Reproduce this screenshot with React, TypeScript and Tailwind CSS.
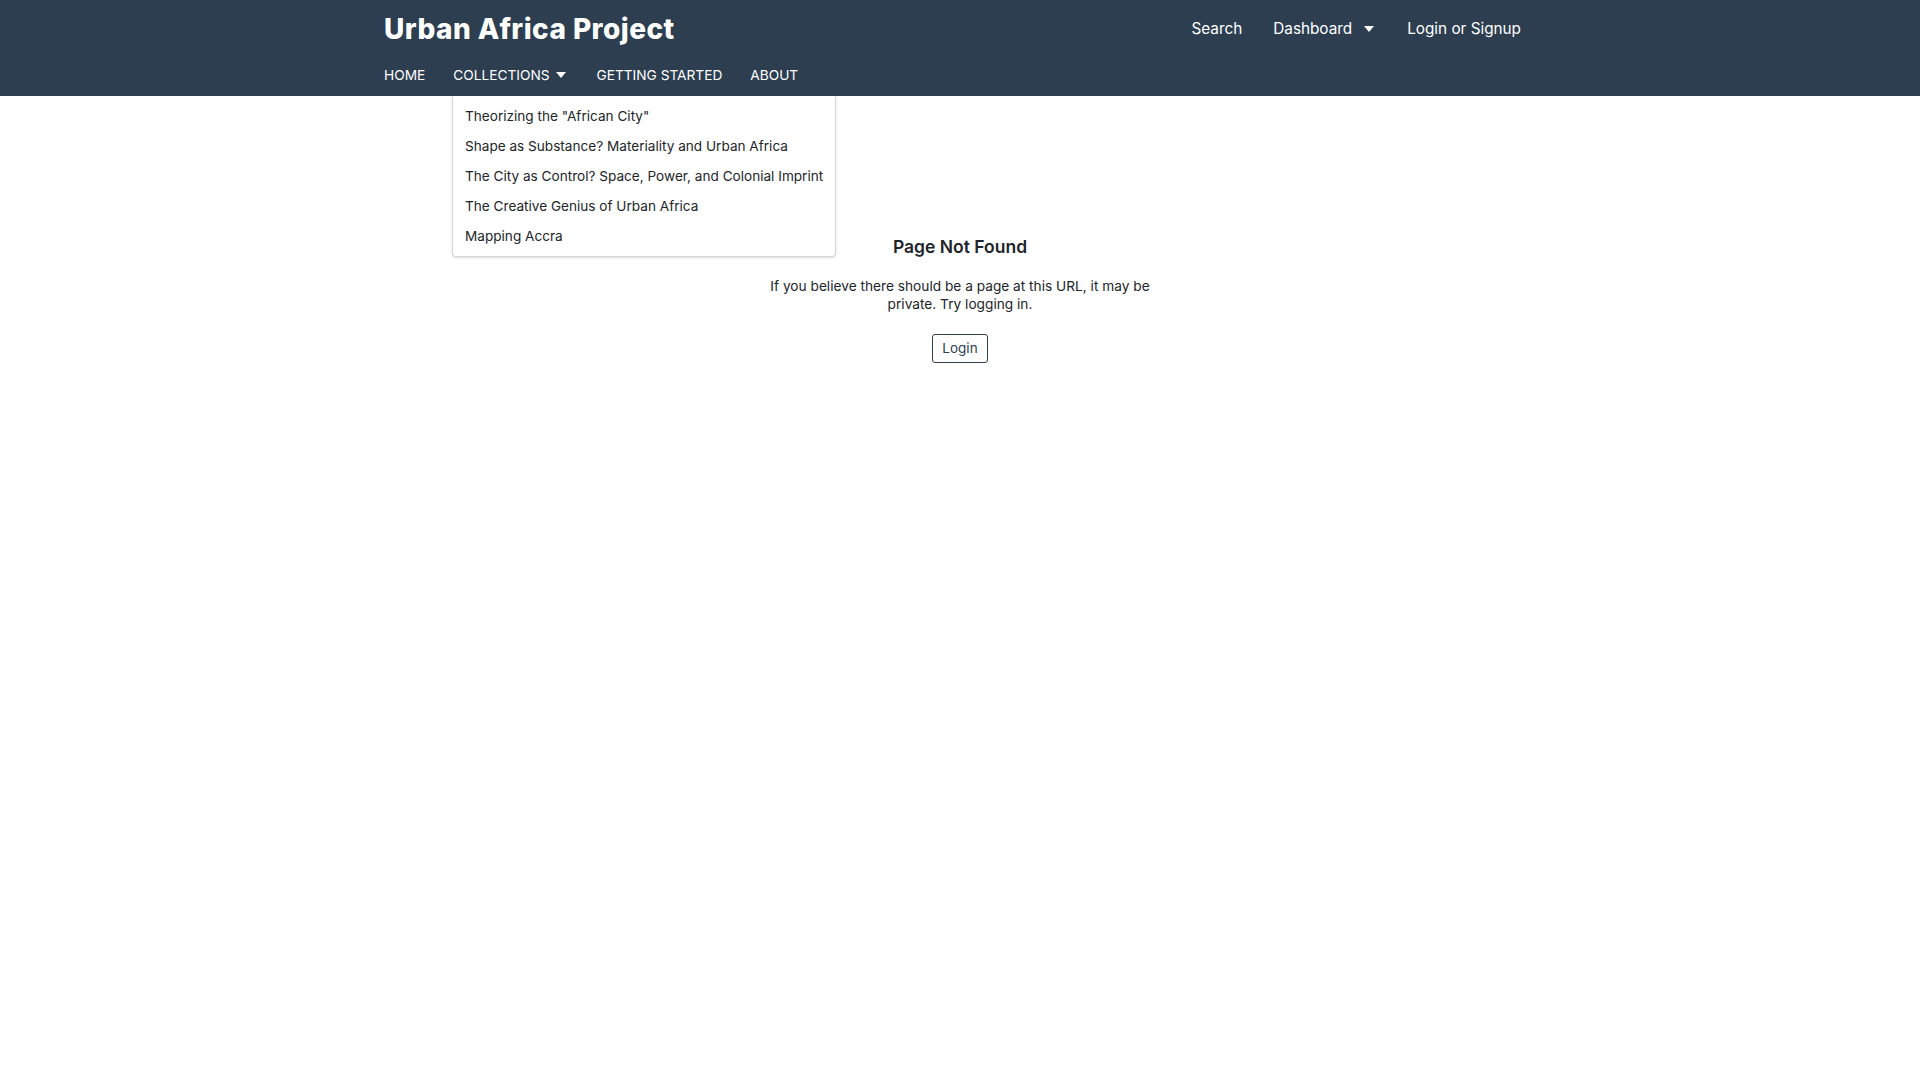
import React from "react";

const items = [
  'Theorizing the "African City"',
  "Shape as Substance? Materiality and Urban Africa",
  "The City as Control? Space, Power, and Colonial Imprint",
  "The Creative Genius of Urban Africa",
  "Mapping Accra",
];

function Caret() {
  return (
    <svg width="10" height="6" viewBox="0 0 10 6" className="inline-block">
      <path d="M0 0 L10 0 L5 6 Z" fill="currentColor" />
    </svg>
  );
}

export default function App() {
  return (
    <div
      className="min-h-screen bg-white text-[#212529]"
      style={{ fontFamily: "Inter, 'Noto Sans', sans-serif" }}
    >
      <header className="bg-[#2c3e50] h-[96px]">
        <div className="mx-auto w-[1152px] h-full flex flex-col">
          <div className="flex items-center justify-between h-[57px] pt-[1px]">
            <div className="text-white font-extrabold text-[28px] tracking-[0.45px] leading-none">
              Urban Africa Project
            </div>
            <nav className="flex items-center text-white text-[15.3px] pr-[15px]">
              <span>Search</span>
              <span className="ml-[31px] flex items-center gap-[12px]">
                Dashboard <Caret />
              </span>
              <span className="ml-[33px]">Login or Signup</span>
            </nav>
          </div>
          <div className="flex items-center h-[37px] text-white text-[13.7px] font-normal relative">
            <span>HOME</span>
            <span className="ml-[28px] flex items-center gap-[7px]">
              COLLECTIONS <Caret />
            </span>
            <span className="ml-[30px]">GETTING STARTED</span>
            <span className="ml-[28px]">ABOUT</span>
            <div className="absolute left-[68px] top-[39px] w-[384px] bg-white border border-[#d6d6d6] border-t-0 rounded-b-[4px] shadow-sm pt-[5px] pb-[5px] z-10">
              {items.map((t) => (
                <div
                  key={t}
                  className="text-[#212529] text-[13.6px] font-normal h-[30px] flex items-center px-[12px] whitespace-nowrap"
                >
                  {t}
                </div>
              ))}
            </div>
          </div>
        </div>
      </header>
      <main className="flex flex-col items-center pt-[138px]">
        <h1 className="text-[17.5px] font-semibold leading-[26px] text-[#212529]">
          Page Not Found
        </h1>
        <p className="mt-[18px] w-[400px] text-center text-[13.7px] leading-[17.5px] text-[#212529]">
          If you believe there should be a page at this URL, it may be private. Try logging in.
        </p>
        <button className="mt-[21px] w-[56px] h-[29px] border border-[#2c3e50] rounded-[3px] text-[13.5px] text-[#2c3e50] flex items-center justify-center">
          Login
        </button>
      </main>
    </div>
  );
}
